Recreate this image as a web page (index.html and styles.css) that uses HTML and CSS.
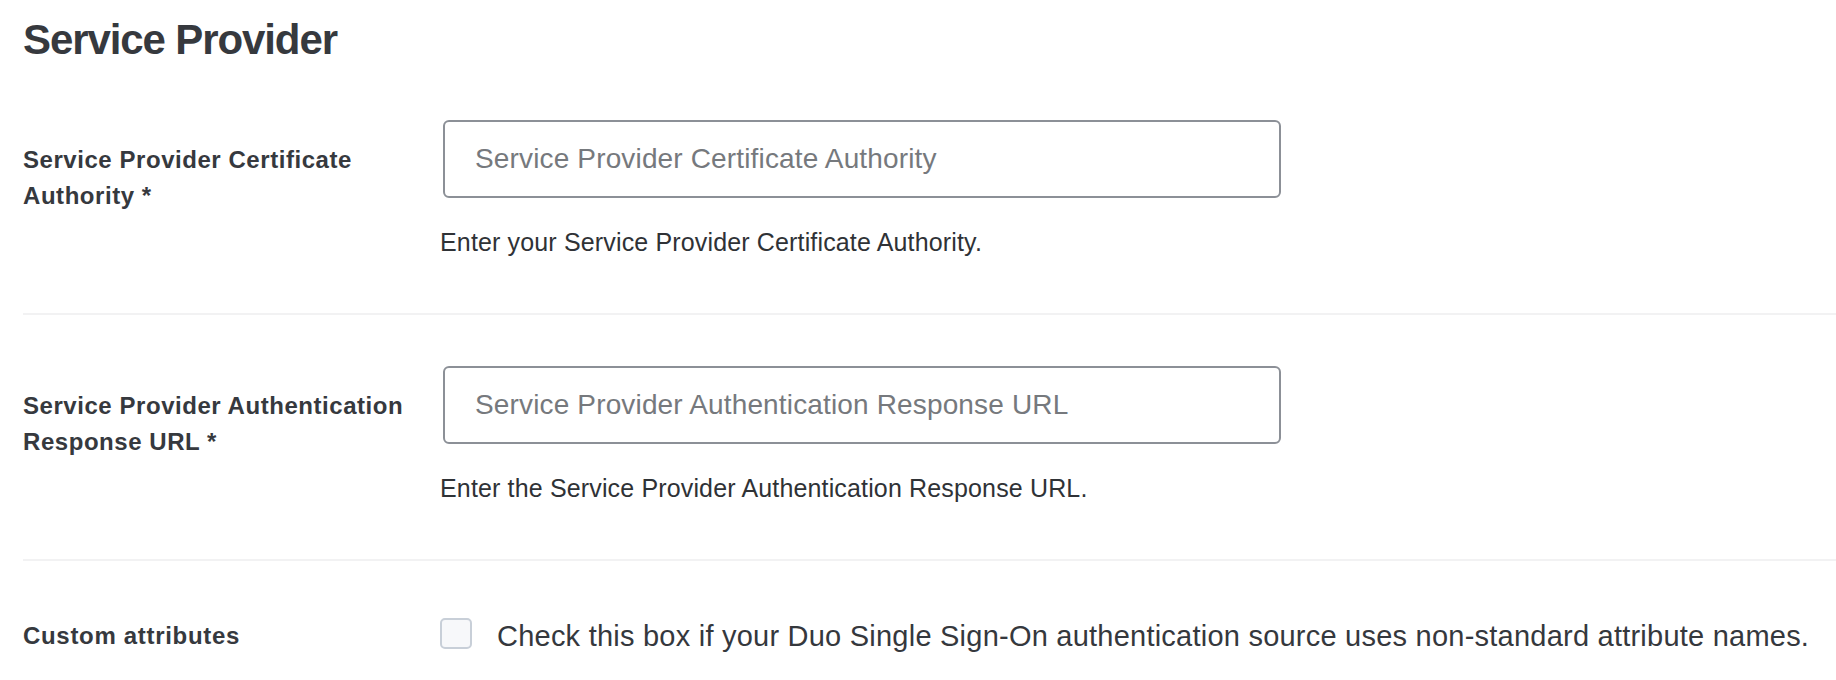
FILE: index.html
```html
<!DOCTYPE html>
<html lang="en">
<head>
<meta charset="utf-8">
<title>Service Provider</title>
<link rel="stylesheet" href="styles.css">
</head>
<body>
<h1 class="title">Service Provider</h1>

<div class="field">
  <label class="field-label" for="sp-ca">Service Provider Certificate Authority *</label>
  <div class="field-control">
    <input class="text-input" id="sp-ca" type="text" placeholder="Service Provider Certificate Authority">
    <p class="help">Enter your Service Provider Certificate Authority.</p>
  </div>
</div>

<div class="field">
  <label class="field-label" for="sp-url">Service Provider Authentication Response URL *</label>
  <div class="field-control">
    <input class="text-input" id="sp-url" type="text" placeholder="Service Provider Authentication Response URL">
    <p class="help">Enter the Service Provider Authentication Response URL.</p>
  </div>
</div>

<div class="field field-last">
  <label class="field-label field-label-check" for="custom-attrs">Custom attributes</label>
  <div class="check-control">
    <input class="checkbox" id="custom-attrs" type="checkbox">
    <label class="check-text" for="custom-attrs">Check this box if your Duo Single Sign-On authentication source uses non-standard attribute names.</label>
  </div>
</div>
</body>
</html>
```

FILE: styles.css
```css
html, body {
  background: #ffffff;
}

body {
  margin: 0;
  padding: 15px 0 0 23px;
  font-family: "Liberation Sans", Arial, Helvetica, sans-serif;
  color: #36393e;
  overflow: hidden;
}

.title {
  margin: 0 0 4px;
  font-size: 42px;
  line-height: 50px;
  font-weight: bold;
  letter-spacing: -1.1px;
  color: #36393e;
}

.field {
  display: grid;
  grid-template-columns: 417px 1fr;
  padding: 52px 0 52px;
  border-bottom: 2px solid #f2f2f3;
}

.field-last {
  border-bottom: none;
}

.field-label {
  max-width: 405px;
  padding-top: 21px;
  font-size: 24px;
  line-height: 36px;
  font-weight: bold;
  letter-spacing: 0.55px;
  color: #36393e;
}

.field-label-check {
  padding-top: 5px;
  letter-spacing: 0.69px;
}

.field-control {
  display: flex;
  flex-direction: column;
  align-items: flex-start;
}

.text-input {
  box-sizing: border-box;
  width: 838px;
  height: 78px;
  margin: -1px 0 0 3px;
  padding: 0 29px 0 30px;
  border: 2px solid #8c9097;
  border-radius: 6px;
  background: #ffffff;
  font-family: "Liberation Sans", Arial, Helvetica, sans-serif;
  font-size: 28px;
  color: #36393e;
  outline: none;
}

.text-input::placeholder {
  color: #76797d;
  opacity: 1;
  letter-spacing: 0.15px;
}

.help {
  margin: 27px 0 0;
  padding-bottom: 2px;
  font-size: 25px;
  line-height: 34px;
  letter-spacing: 0.15px;
  color: #2f3236;
}

.check-control {
  display: flex;
  align-items: flex-start;
  gap: 25px;
}

.checkbox {
  appearance: none;
  -webkit-appearance: none;
  box-sizing: border-box;
  flex: none;
  width: 32px;
  height: 31px;
  margin: 5px 0 0;
  border: 2px solid #c8cfd8;
  border-radius: 5px;
  background: #f7f8fa;
}

.check-text {
  margin-top: 5px;
  font-size: 29px;
  line-height: 36px;
  letter-spacing: 0.23px;
  color: #35383d;
  white-space: nowrap;
}
```
